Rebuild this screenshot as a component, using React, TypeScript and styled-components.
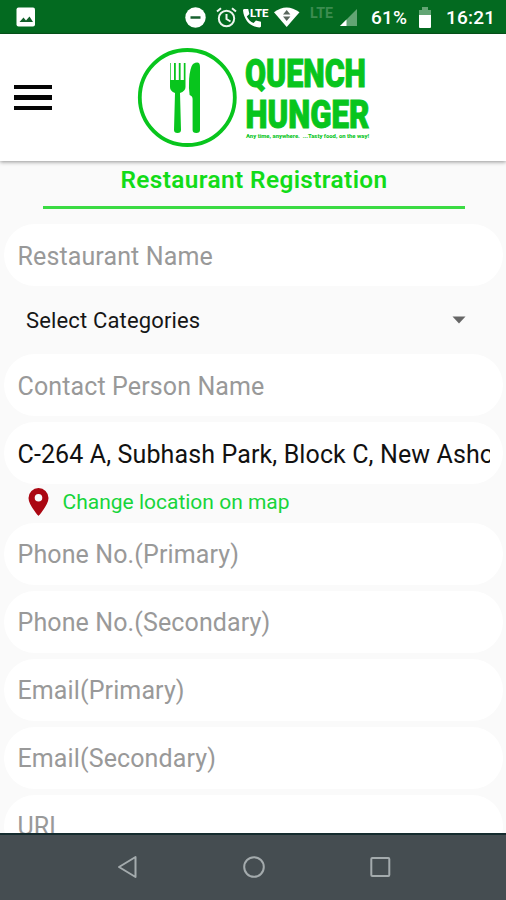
import React from "react";
import styled, { createGlobalStyle } from "styled-components";

const GlobalStyle = createGlobalStyle`
  * { box-sizing: border-box; }
  html, body { margin: 0; padding: 0; overflow: hidden; }
  body { font-family: Roboto, sans-serif; background: #fafafa; }
  svg { display: block; flex: none; overflow: visible; }
`;

const Screen = styled.div`
  display: flex;
  flex-direction: column;
  width: 506px;
  height: 900px;
  overflow: hidden;
  background: #fafafa;
`;

const StatusBar = styled.div`
  display: flex;
  align-items: center;
  flex: none;
  height: 34px;
  padding: 1px 0 0 16px;
  background: #036a20;
  border-bottom: 1px solid #06581c;
  color: #fff;
`;

const StatusItem = styled.div<{ $gap?: number; $width: number }>`
  flex: none;
  width: ${(p) => p.$width}px;
  margin-left: ${(p) => p.$gap ?? 0}px;
`;

const StatusText = styled(StatusItem)<{ $spacing: number }>`
  font-size: 19px;
  line-height: 22px;
  font-weight: 500;
  letter-spacing: ${(p) => p.$spacing}px;
  white-space: nowrap;
  padding-top: 2px;
`;

const Header = styled.header`
  display: flex;
  align-items: center;
  flex: none;
  height: 127px;
  padding-left: 14px;
  background: #fff;
  box-shadow: 0 1px 4px rgba(0, 0, 0, 0.42);
  z-index: 1;
`;

const MenuButton = styled.button`
  display: flex;
  flex-direction: column;
  gap: 6px;
  width: 38px;
  padding: 0;
  border: 0;
  background: none;
`;

const MenuBar = styled.span`
  height: 4.5px;
  background: #050505;
`;

const Logo = styled.div`
  margin-left: 84px;
`;

const Content = styled.main`
  display: flex;
  flex-direction: column;
  flex: 1;
  min-height: 0;
  overflow: hidden;
`;

const Title = styled.h1`
  width: 422px;
  height: 48px;
  margin: 0 0 15px 43px;
  flex: none;
  border-bottom: 3px solid #3bdb43;
  color: #12dc18;
  font-size: 24.4px;
  line-height: 37px;
  font-weight: 600;
  letter-spacing: 0.38px;
  text-align: center;
`;

const Field = styled.input`
  display: block;
  flex: none;
  width: 499px;
  height: 62px;
  margin: 0 0 6px 4px;
  padding: 2px 13.5px 0 13.5px;
  border: 0;
  border-radius: 31px;
  background: #fff;
  color: #111;
  font-family: Roboto, sans-serif;
  font-size: 25px;
  letter-spacing: 0.12px;
  outline: none;
  &::placeholder { color: #999; opacity: 1; }
`;

const CategorySelect = styled.div`
  display: flex;
  align-items: center;
  justify-content: space-between;
  flex: none;
  height: 62px;
  padding: 0 40px 6px 26px;
  color: #161616;
  font-size: 22px;
  letter-spacing: 0.15px;
`;

const LocationLink = styled.a`
  display: flex;
  align-items: center;
  gap: 13.5px;
  flex: none;
  height: 38.5px;
  margin-top: -6px;
  padding: 0 0 2px 28px;
  color: #17d53b;
  font-size: 21px;
`;

const NavBar = styled.nav`
  display: flex;
  align-items: center;
  justify-content: space-between;
  flex: none;
  height: 67px;
  padding: 0 115px 2px 117px;
  background: #454d51;
  border-top: 2px solid #152c2f;
`;

const QuenchLogo = () => (
  <svg width="236" height="102" viewBox="0 0 236 102" fill="#08c51d">
    <circle cx="51.3" cy="50.5" r="47.5" fill="none" stroke="#08c51d" strokeWidth="3.8" />
    <path d="M33 16h1.7v17h3.3V16h1.8v17h3V16h1.8v17h3.2V16h1.7v24q0 4-5.5 6l1 37q0 3-3.5 3t-3.5-3l1-37q-5-2-5-6V16z" />
    <path d="M57 17q7-4 7 3v63q0 3-3.7 3t-3.7-3V52q0-3-3-4-1-7-.5-16 1-12 3.9-15z" />
    <text x="109" y="40" fontFamily="Roboto, sans-serif" fontWeight="900" fontSize="39.5" textLength="121" lengthAdjust="spacingAndGlyphs" stroke="#08c51d" strokeWidth="1">QUENCH</text>
    <text x="109.5" y="80.6" fontFamily="Roboto, sans-serif" fontWeight="900" fontSize="39.5" textLength="124" lengthAdjust="spacingAndGlyphs" stroke="#08c51d" strokeWidth="1">HUNGER</text>
    <text x="110" y="91" fontFamily="Roboto, sans-serif" fontWeight="800" fontSize="6" textLength="123" lengthAdjust="spacingAndGlyphs" xmlSpace="preserve">Any time, anywhere.  ...Tasty food, on the way!</text>
  </svg>
);

const fieldsBelow = ["Phone No.(Primary)", "Phone No.(Secondary)", "Email(Primary)", "Email(Secondary)", "URL"];

export default function App() {
  return (
    <Screen>
      <GlobalStyle />
      <StatusBar>
        <StatusItem $width={20}>
          <svg width="20" height="20" viewBox="0 0 20 20">
            <rect x=".5" y=".5" width="18.5" height="19" rx="2" fill="#fff" />
            <path d="M3.5 15l4-4.5 2.5 3 3.5-4 3.5 5.5z" fill="#12602a" />
          </svg>
        </StatusItem>
        <StatusItem $width={21} $gap={149}>
          <svg width="21" height="21" viewBox="0 0 21 21">
            <circle cx="10.5" cy="10.5" r="10.2" fill="#fff" />
            <path d="M5.5 10.5h10" stroke="#17602f" strokeWidth="2.5" />
          </svg>
        </StatusItem>
        <StatusItem $width={21} $gap={10}>
          <svg width="21" height="21" viewBox="0 0 21 21" fill="none" stroke="#edf5ee" strokeWidth="2">
            <circle cx="10.5" cy="11.5" r="7.7" />
            <path d="M10.5 7v5l4 2.5M1 4.5l4-3.3M20 4.5l-4-3.3" />
          </svg>
        </StatusItem>
        <StatusItem $width={26} $gap={6}>
          <svg width="26" height="21" viewBox="0 0 26 21" fill="#fff">
            <path d="M1 2h4.2l1.2 5-2.6 2.4c1.4 3 3.7 5.3 6.8 6.7l2.3-2.6 5.1 1.3V19c0 1-.7 1.4-1.6 1.4C7.2 20 1 13 0 3.5Q0 2 1 2z" />
            <text x="7" y="9.5" fontFamily="Roboto, sans-serif" fontWeight="800" fontSize="11.5" textLength="18.5" lengthAdjust="spacingAndGlyphs">LTE</text>
          </svg>
        </StatusItem>
        <StatusItem $width={26} $gap={5}>
          <svg width="26" height="20" viewBox="0 0 26 20">
            <path d="M0 5.3Q12.5-4.3 25.5 5.3L12.7 20z" fill="#fff" />
            <path d="M9 7.5L12.7 3l3.7 4.5zM9 9.5h7.4L12.7 14z" fill="#59665d" />
          </svg>
        </StatusItem>
        <StatusItem $width={24} $gap={10}>
          <svg width="24" height="22" viewBox="0 0 24 22">
            <text x="0" y="12" fill="#3c8c50" fontFamily="Roboto, sans-serif" fontWeight="700" fontSize="14" textLength="23" lengthAdjust="spacingAndGlyphs">LTE</text>
          </svg>
        </StatusItem>
        <StatusItem $width={19} $gap={5}>
          <svg width="19" height="19" viewBox="0 0 19 19">
            <path d="M18 1v17H1z" fill="#63a574" />
            <path d="M7.5 11.5V18H1z" fill="#fff" />
          </svg>
        </StatusItem>
        <StatusText $width={38} $gap={13} $spacing={0.25}>61%</StatusText>
        <StatusItem $width={14} $gap={9}>
          <svg width="14" height="21" viewBox="0 0 14 21">
            <path d="M4 0h6v3h3v6H1V3h3z" fill="#63a574" />
            <path d="M1 8h12v12q0 1-1 1H2q-1 0-1-1z" fill="#fff" />
          </svg>
        </StatusItem>
        <StatusText $width={50} $gap={14} $spacing={0.2}>16:21</StatusText>
      </StatusBar>
      <Header>
        <MenuButton aria-label="Menu">
          <MenuBar />
          <MenuBar />
          <MenuBar />
        </MenuButton>
        <Logo>
          <QuenchLogo />
        </Logo>
      </Header>
      <Content>
        <Title>Restaurant Registration</Title>
        <Field placeholder="Restaurant Name" />
        <CategorySelect>
          Select Categories
          <svg width="14" height="8" viewBox="0 0 14 8">
            <path d="M.5.5h13L7 7.5z" fill="#666" />
          </svg>
        </CategorySelect>
        <Field placeholder="Contact Person Name" />
        <Field readOnly value="C-264 A, Subhash Park, Block C, New Ashok Nagar" />
        <LocationLink>
          <svg width="21" height="28" viewBox="0 0 21 28">
            <path fillRule="evenodd" d="M10.5 0a10 10 0 0 1 10 10c0 7-10 18-10 18S.5 17 .5 10a10 10 0 0 1 10-10zm0 6a3.8 3.8 0 1 0 0 7.6 3.8 3.8 0 0 0 0-7.6z" fill="#ab0712" />
          </svg>
          Change location on map
        </LocationLink>
        {fieldsBelow.map((label) => (
          <Field key={label} placeholder={label} />
        ))}
      </Content>
      <NavBar>
        <svg width="21" height="24" viewBox="0 0 21 24" fill="none" stroke="#a4abad" strokeWidth="2" strokeLinejoin="round">
          <path d="M18.5 2v20L2 12z" />
        </svg>
        <svg width="24" height="24" viewBox="0 0 24 24" fill="none" stroke="#a4abad" strokeWidth="2">
          <circle cx="12" cy="12" r="9.8" />
        </svg>
        <svg width="21" height="22" viewBox="0 0 21 22" fill="none" stroke="#a4abad" strokeWidth="2">
          <rect x="1.3" y="2" width="18" height="18" rx="1" />
        </svg>
      </NavBar>
    </Screen>
  );
}
